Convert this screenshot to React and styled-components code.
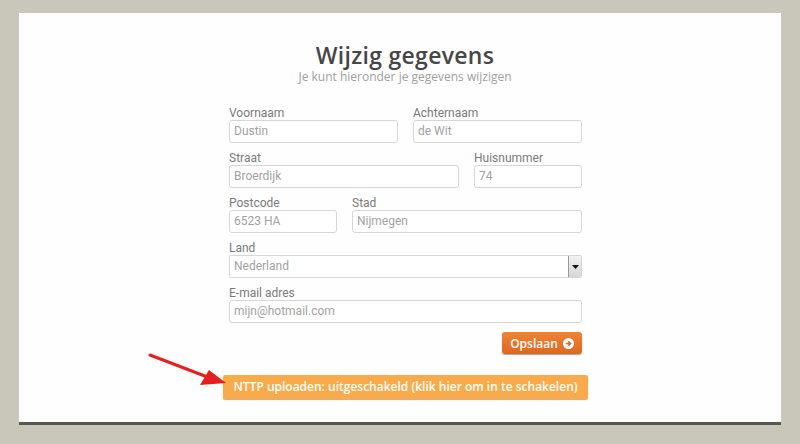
import styled, { createGlobalStyle } from 'styled-components';

const GlobalStyle = createGlobalStyle`
  html, body {
    margin: 0;
    padding: 0;
    background: #c9c7ba;
  }
  * {
    box-sizing: border-box;
  }
`;

const rows = [
  [
    { label: 'Voornaam', value: 'Dustin', width: 169 },
    { label: 'Achternaam', value: 'de Wit', width: 169 },
  ],
  [
    { label: 'Straat', value: 'Broerdijk', width: 230 },
    { label: 'Huisnummer', value: '74', width: 108 },
  ],
  [
    { label: 'Postcode', value: '6523 HA', width: 108 },
    { label: 'Stad', value: 'Nijmegen', width: 230 },
  ],
];

const App = () => (
  <>
    <GlobalStyle />
    <Page>
      <Card>
        <Title>Wijzig gegevens</Title>
        <Subtitle>Je kunt hieronder je gegevens wijzigen</Subtitle>
        <Form>
          {rows.map((row, i) => (
            <Row key={i}>
              {row.map(f => (
                <Field key={f.label} $width={f.width}>
                  <Label>{f.label}</Label>
                  <Input>{f.value}</Input>
                </Field>
              ))}
            </Row>
          ))}
          <Field $width={353}>
            <Label>Land</Label>
            <Select>
              Nederland
              <SelectButton>
                <svg width="7" height="4" viewBox="0 0 7 4">
                  <path d="M0 0h7L3.5 4z" fill="#111" />
                </svg>
              </SelectButton>
            </Select>
          </Field>
          <Field $width={353}>
            <Label>E-mail adres</Label>
            <Input>mijn@hotmail.com</Input>
          </Field>
          <Actions>
            <SaveButton>
              Opslaan
              <svg width="11" height="11" viewBox="0 0 12 12">
                <circle cx="6" cy="6" r="6" fill="#fff" />
                <path d="M3 6h5M5.8 3.6 8.2 6 5.8 8.4" stroke="#e06d25" strokeWidth="1.8" fill="none" />
              </svg>
            </SaveButton>
          </Actions>
        </Form>
        <UploadWrap>
          <Arrow width="90" height="40" viewBox="0 0 90 40">
            <path d="M2 3 L62 26" stroke="#e3211f" strokeWidth="3" strokeLinecap="round" />
            <path d="M78 31 L52 33 L61 18 Z" fill="#e3211f" />
          </Arrow>
          <UploadButton>NTTP uploaden: uitgeschakeld (klik hier om in te schakelen)</UploadButton>
        </UploadWrap>
      </Card>
    </Page>
  </>
);

const Page = styled.div`
  width: 800px;
  height: 444px;
  padding: 13px 19px 0;
`;

const Card = styled.div`
  height: 412px;
  background: #fefefe;
  border-bottom: 3px solid #58574f;
  display: flex;
  flex-direction: column;
  align-items: center;
  padding-top: 30px;
  position: relative;
`;

const Title = styled.h1`
  margin: 0;
  font-family: 'Open Sans', sans-serif;
  font-weight: 600;
  font-size: 23px;
  line-height: 25px;
  color: #474646;
  letter-spacing: 0.3px;
  padding-left: 10px;
`;

const Subtitle = styled.div`
  font-family: 'Open Sans', sans-serif;
  font-size: 12px;
  line-height: 14px;
  color: #a0a0a0;
  margin-top: 2px;
  padding-left: 10px;
`;

const Form = styled.div`
  width: 353px;
  margin-top: 22px;
  margin-left: 11px;
  display: flex;
  flex-direction: column;
  gap: 8px;
`;

const Row = styled.div`
  display: flex;
  justify-content: space-between;
`;

const Field = styled.div`
  width: ${p => p.$width}px;
  display: flex;
  flex-direction: column;
`;

const Label = styled.div`
  font-family: Roboto, sans-serif;
  font-size: 12px;
  line-height: 14px;
  color: #7a7a7a;
`;

const Input = styled.div`
  height: 23px;
  border: 1px solid #d6d6d6;
  border-radius: 3px;
  background: #fff;
  padding: 0 4px;
  font-family: Roboto, sans-serif;
  font-size: 12px;
  line-height: 21px;
  color: #a2a2a2;
`;

const Select = styled(Input)`
  display: flex;
  justify-content: space-between;
  align-items: center;
  padding-right: 0;
  border-radius: 2px;
`;

const SelectButton = styled.div`
  width: 13px;
  height: 21px;
  background: linear-gradient(#f2f2f2, #d6d6d6);
  border-left: 1px solid #999;
  border-radius: 0 2px 2px 0;
  display: flex;
  align-items: center;
  justify-content: center;
`;

const Actions = styled.div`
  display: flex;
  justify-content: flex-end;
  margin-top: 1px;
`;

const SaveButton = styled.div`
  width: 80px;
  height: 22px;
  border-radius: 3px;
  background: linear-gradient(#ef8435, #dd6820);
  box-shadow: 0 1px 1px rgba(0, 0, 0, 0.35);
  color: #fff;
  font-family: 'Open Sans', sans-serif;
  font-weight: 600;
  font-size: 12px;
  display: flex;
  align-items: center;
  justify-content: center;
  gap: 5px;
`;

const UploadWrap = styled.div`
  margin-top: 21px;
  margin-left: 11px;
`;

const Arrow = styled.svg`
  position: absolute;
  left: 129px;
  top: 339px;
`;

const UploadButton = styled.div`
  height: 24px;
  padding: 0 10px;
  background: #f9ab4b;
  border-radius: 2px;
  box-shadow: 0 1px 1px rgba(180, 110, 30, 0.6);
  color: #fff;
  font-family: 'Open Sans', sans-serif;
  font-weight: 600;
  font-size: 12px;
  line-height: 23px;
  white-space: nowrap;
`;

export default App;
